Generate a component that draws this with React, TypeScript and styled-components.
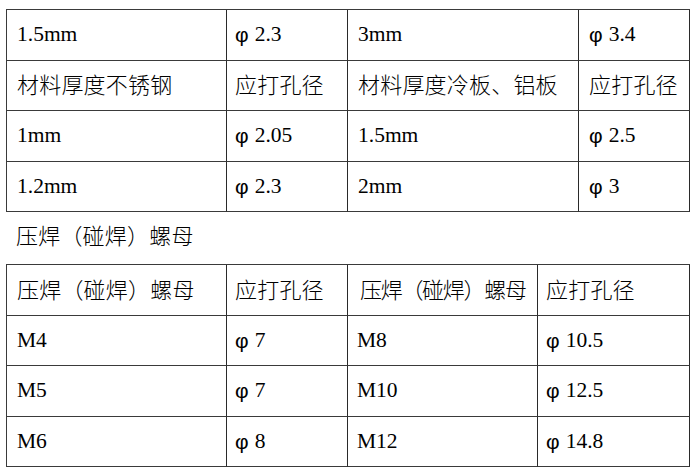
import React from "react";
import styled, { createGlobalStyle } from "styled-components";

const Global = createGlobalStyle`
  html, body { margin: 0; padding: 0; background: #fff; }
  body { font-family: "Liberation Serif", "Noto Sans CJK SC", serif; color: #000; }
`;

const Page = styled.div`
  width: 696px;
  height: 472px;
  box-sizing: border-box;
  padding: 9px 0 0 6px;
  overflow: hidden;
`;

const Grid = styled.div<{ $cols: string }>`
  display: grid;
  grid-template-columns: ${(p) => p.$cols};
  grid-auto-rows: 50.5px;
  width: max-content;
  border-top: 1px solid #3a3a3a;
  border-left: 1px solid #3a3a3a;
`;

const Cell = styled.div<{ $pad?: number }>`
  box-sizing: border-box;
  border-right: 1px solid #2a2a2a;
  border-bottom: 1px solid #3a3a3a;
  display: flex;
  align-items: center;
  padding-left: ${(p) => p.$pad ?? 10}px;
  font-size: 21.5px;
  line-height: 1;
  white-space: nowrap;
`;

const Cjk = styled.span<{ $tight?: boolean }>`
  font-family: "Noto Sans CJK SC", sans-serif;
  font-size: 22px;
  font-weight: 300;
  line-height: 1;
  letter-spacing: ${(p) => (p.$tight ? "-1.3px" : "0.2px")};
  margin-left: ${(p) => (p.$tight ? "3px" : "0")};
  margin-bottom: 4px;
`;

const Phi = styled.span`
  font-family: "Liberation Sans", "DejaVu Sans", sans-serif;
  font-size: 21px;
  margin-right: 6px;
`;

const Caption = styled.div`
  height: 52px;
  display: flex;
  align-items: center;
  padding-left: 10px;
  padding-bottom: 4px;
  box-sizing: border-box;
  line-height: 1;
`;

type V = string;

const isCjk = (s: string) => /[\u3000-\u9fff\uff00-\uffef]/.test(s);

const Content: React.FC<{ v: V; tight?: boolean }> = ({ v, tight }) => {
  if (v.startsWith("φ")) {
    return (
      <>
        <Phi>φ</Phi>
        {v.slice(2)}
      </>
    );
  }
  if (isCjk(v)) return <Cjk $tight={tight}>{v}</Cjk>;
  return <>{v}</>;
};

const table1: V[][] = [
  ["1.5mm", "φ 2.3", "3mm", "φ 3.4"],
  ["材料厚度不锈钢", "应打孔径", "材料厚度冷板、铝板", "应打孔径"],
  ["1mm", "φ 2.05", "1.5mm", "φ 2.5"],
  ["1.2mm", "φ 2.3", "2mm", "φ 3"],
];

const table2: V[][] = [
  ["压焊（碰焊）螺母", "应打孔径", "压焊（碰焊）螺母", "应打孔径"],
  ["M4", "φ 7", "M8", "φ 10.5"],
  ["M5", "φ 7", "M10", "φ 12.5"],
  ["M6", "φ 8", "M12", "φ 14.8"],
];

const pads1 = [10, 8, 10, 10];
const pads2 = [10, 8, 9, 8];

const Table: React.FC<{ rows: V[][]; cols: string; pads: number[]; tightCol?: number }> = ({
  rows,
  cols,
  pads,
  tightCol,
}) => (
  <Grid $cols={cols}>
    {rows.map((r, i) =>
      r.map((c, j) => (
        <Cell key={`${i}-${j}`} $pad={pads[j]}>
          <Content v={c} tight={j === tightCol} />
        </Cell>
      ))
    )}
  </Grid>
);

export default function App() {
  return (
    <>
      <Global />
      <Page>
        <Table rows={table1} cols="220px 121px 231px 111px" pads={pads1} />
        <Caption>
          <Cjk>压焊（碰焊）螺母</Cjk>
        </Caption>
        <Table rows={table2} cols="220px 121px 190px 152px" pads={pads2} tightCol={2} />
      </Page>
    </>
  );
}
